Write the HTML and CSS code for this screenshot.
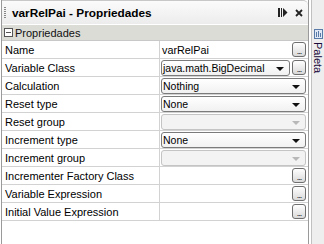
FILE: index.html
```html
<!DOCTYPE html>
<html>
<head>
  <title>varRelPai - Propriedades</title>
  <link rel="stylesheet" href="styles.css">
</head>
<body>

<div class="frame">
  <div class="panel">
    <div class="titlebar">
      <span class="grip"></span>
      <span class="title">varRelPai - Propriedades</span>
      <span class="tools">
        <svg width="10" height="9" viewBox="0 0 10 9"><rect x="0" y="0" width="2" height="9" fill="#222"/><rect x="3" y="0" width="1" height="9" fill="#222"/><path d="M5 0 L9.5 4.5 L5 9 Z" fill="#222"/></svg>
        <svg width="8" height="8" viewBox="0 0 8 8"><path d="M1 1 L7 7 M7 1 L1 7" stroke="#222" stroke-width="1.8"/></svg>
      </span>
    </div>

    <div class="section"><span class="minus"></span>Propriedades</div>

    <div class="sheet">
      <div class="row">
        <div class="key">Name</div>
        <div class="val"><span class="txt">varRelPai</span><span class="dots">...</span></div>
      </div>
      <div class="row">
        <div class="key">Variable Class</div>
        <div class="val"><span class="combo">java.math.BigDecimal<i class="arrow"></i></span><span class="dots">...</span></div>
      </div>
      <div class="row">
        <div class="key">Calculation</div>
        <div class="val"><span class="combo">Nothing<i class="arrow"></i></span></div>
      </div>
      <div class="row">
        <div class="key">Reset type</div>
        <div class="val"><span class="combo">None<i class="arrow"></i></span></div>
      </div>
      <div class="row">
        <div class="key">Reset group</div>
        <div class="val"><span class="combo off"><i class="arrow"></i></span></div>
      </div>
      <div class="row">
        <div class="key">Increment type</div>
        <div class="val"><span class="combo">None<i class="arrow"></i></span></div>
      </div>
      <div class="row">
        <div class="key">Increment group</div>
        <div class="val"><span class="combo off"><i class="arrow"></i></span></div>
      </div>
      <div class="row">
        <div class="key">Incrementer Factory Class</div>
        <div class="val"><span class="txt"></span><span class="dots">...</span></div>
      </div>
      <div class="row">
        <div class="key">Variable Expression</div>
        <div class="val"><span class="txt"></span><span class="dots">...</span></div>
      </div>
      <div class="row">
        <div class="key">Initial Value Expression</div>
        <div class="val"><span class="txt"></span><span class="dots">...</span></div>
      </div>
    </div>
  </div>

  <div class="side">
    <div class="tab">
      <svg width="9" height="10" viewBox="0 0 9 10"><rect x="0.5" y="0.5" width="8" height="9" fill="#dfe8f4" stroke="#5a7aa8"/><rect x="2" y="3" width="1" height="5" fill="#5a7aa8"/><rect x="4" y="2" width="1" height="6" fill="#5a7aa8"/><rect x="6" y="4" width="1" height="4" fill="#5a7aa8"/></svg>
      <span class="tablabel">Paleta</span>
    </div>
  </div>
</div>

</body>
</html>
```

FILE: styles.css
```css
body {
  margin: 0;
  background: #ffffff;
  font-family: 'Liberation Sans', Arial, sans-serif;
  font-size: 11px;
  color: #000;
}

.frame {
  display: flex;
  height: 244px;
}

.panel {
  width: 307px;
  margin-left: 1px;
  border-left: 1px solid #9a9a9a;
  border-right: 1px solid #9a9a9a;
  display: flex;
  flex-direction: column;
}

.titlebar {
  height: 24px;
  display: flex;
  align-items: center;
  background: linear-gradient(#fbfbfb, #ececec);
  border-top: 1px solid #c8c8c8;
  border-top-right-radius: 5px;
  box-sizing: border-box;
}

.grip {
  width: 2px;
  height: 12px;
  margin: 0 6px 0 2px;
  background: repeating-linear-gradient(#888 0 1px, transparent 1px 2px);
}

.title {
  font-weight: bold;
  font-size: 11.8px;
  flex: 1;
}

.tools {
  display: flex;
  align-items: center;
  gap: 7px;
  margin-right: 5px;
}

.section {
  height: 15px;
  margin-top: 1px;
  display: flex;
  align-items: center;
  background: #dcdcd6;
  border-bottom: 1px solid #c8c8c8;
  font-size: 11px;
  color: #111;
}

.minus {
  width: 7px;
  height: 7px;
  margin: 0 2px 0 2px;
  border: 1px solid #555;
  background: linear-gradient(#555, #555) center / 5px 1px no-repeat, #fff;
}

.row {
  display: flex;
  height: 18px;
  border-bottom: 1px solid #d2d2d2;
  box-sizing: border-box;
}

.key {
  width: 154px;
  padding-left: 3px;
  border-right: 1px solid #d2d2d2;
  display: flex;
  align-items: center;
  font-size: 11px;
  white-space: nowrap;
}

.val {
  flex: 1;
  display: flex;
  align-items: center;
  padding: 0 2px 0 1px;
  gap: 2px;
}

.txt {
  flex: 1;
  padding-left: 1px;
  font-size: 10.8px;
}

.combo {
  flex: 1;
  height: 16px;
  box-sizing: border-box;
  border: 1px solid #7b7b7b;
  border-radius: 3px;
  background: linear-gradient(#ffffff, #f1f1f1);
  display: flex;
  align-items: center;
  padding-left: 1px;
  font-size: 10.5px;
  position: relative;
}

.combo.off {
  border-color: #c4c4c4;
  background: #f3f3f3;
}

.arrow {
  position: absolute;
  right: 5px;
  top: 6px;
  width: 0;
  height: 0;
  border-left: 4px solid transparent;
  border-right: 4px solid transparent;
  border-top: 4px solid #111;
}

.combo.off .arrow {
  border-top-color: #b8b8b8;
}

.dots {
  width: 14px;
  height: 15px;
  box-sizing: border-box;
  border: 1px solid #6e6e6e;
  border-radius: 3px;
  background: linear-gradient(#ffffff, #d9d9d9);
  font-size: 9px;
  line-height: 16px;
  text-align: center;
  letter-spacing: -1px;
  color: #222;
}

.side {
  flex: 1;
  background: #eeeeee;
  border-left: 1px solid #c0c0c0;
  margin-left: 2px;
}

.tab {
  margin-top: 29px;
  display: flex;
  flex-direction: column;
  align-items: center;
  gap: 3px;
}

.tablabel {
  writing-mode: vertical-rl;
  font-size: 11px;
  color: #1a0a3a;
}
```
